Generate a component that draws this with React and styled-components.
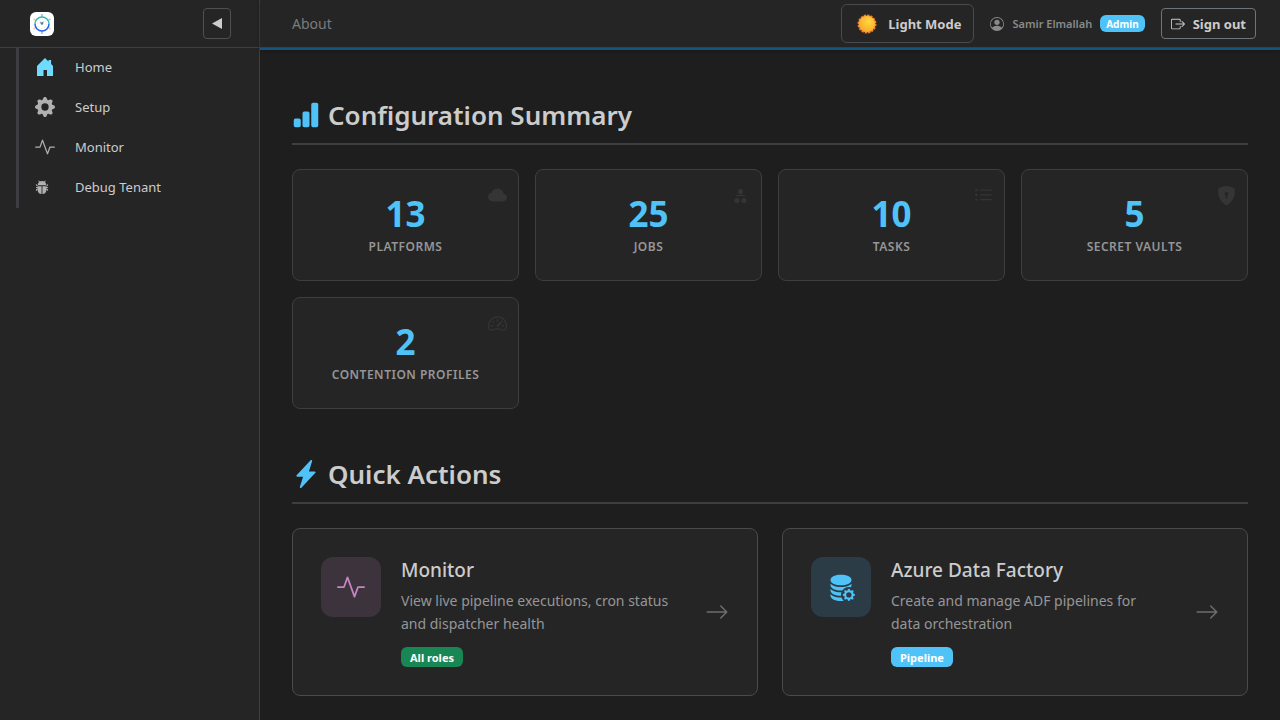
import React from 'react'
import styled, { createGlobalStyle } from 'styled-components'
import {
    BsActivity,
    BsArrowRight,
    BsBarChartFill,
    BsBoxArrowRight,
    BsBugFill,
    BsCloudFill,
    BsDatabaseFillGear,
    BsGearFill,
    BsLightningChargeFill,
    BsListUl,
    BsPersonCircle,
    BsShieldLockFill,
    BsSpeedometer2,
} from 'react-icons/bs'

const GlobalStyle = createGlobalStyle`
    * {
        box-sizing: border-box;
    }

    body {
        margin: 0;
        background: #1e1e1e;
        color: #cccccc;
        font-family: "Segoe UI", "Noto Sans", "Open Sans", sans-serif;
        font-size: 14px;
    }

    button {
        font-family: inherit;
        cursor: pointer;
    }

    svg {
        display: block;
        flex: none;
    }
`

const Layout = styled.div`
    display: flex;
    min-height: 100vh;
`

const Sidebar = styled.aside`
    flex: none;
    width: 260px;
    background: #252526;
    border-right: 1px solid #3e3e42;
`

const SidebarHeader = styled.div`
    display: flex;
    align-items: center;
    justify-content: space-between;
    height: 48px;
    padding: 0 28px 0 30px;
    border-bottom: 1px solid #3e3e42;
`

const CollapseButton = styled.button`
    display: flex;
    align-items: center;
    justify-content: center;
    width: 28px;
    height: 31px;
    padding: 0;
    background: transparent;
    border: 1px solid #505054;
    border-radius: 4px;
    color: #cccccc;
`

const Nav = styled.nav`
    display: flex;
    flex-direction: column;
    margin-left: 16px;
    border-left: 3px solid #3e3e42;
`

const NavLink = styled.a`
    display: flex;
    align-items: center;
    height: 40px;
    padding: 0 0 3px 16px;
    color: #cccccc;
    font-size: 13px;
    text-decoration: none;
`

const NavIcon = styled.span`
    width: 40px;
    color: ${props => props.$active ? '#6fdcff' : '#b0b0b0'};
`

const Content = styled.div`
    flex: 1;
    min-width: 0;
`

const TopBar = styled.header`
    display: flex;
    align-items: center;
    height: 48px;
    margin-bottom: 2px;
    padding: 0 24px 0 32px;
    background: #252526;
    border-bottom: 1px solid #3e3e42;
    box-shadow: 0 2px 0 #17537f, 0 2px 4px rgba(0, 0, 0, 0.3);
`

const AboutLink = styled.a`
    margin-right: auto;
    color: #7b7b7b;
    font-size: 14px;
    text-decoration: none;
`

const ThemeButton = styled.button`
    display: flex;
    align-items: center;
    gap: 11px;
    height: 39px;
    padding: 0 12px 0 15px;
    background: transparent;
    border: 1px solid #4a4a4d;
    border-radius: 6px;
    color: #cccccc;
    font-size: 13px;
    font-weight: 700;
`

const User = styled.div`
    display: flex;
    align-items: center;
    gap: 8px;
    margin: 0 16px;
    color: #8a8a8a;
    font-size: 11px;
    font-weight: 600;
`

const Badge = styled.span`
    display: inline-flex;
    align-items: center;
    height: ${props => props.$small ? '17px' : '20px'};
    padding: 0 ${props => props.$small ? '6px' : '9px'};
    background: ${props => props.$color};
    border-radius: 6px;
    color: #ffffff;
    font-size: ${props => props.$small ? '10px' : '11px'};
    font-weight: 700;
`

const SignOutButton = styled.button`
    display: flex;
    align-items: center;
    gap: 8px;
    height: 31px;
    padding: 0 9px;
    background: transparent;
    border: 1px solid #6c757d;
    border-radius: 4px;
    color: #cccccc;
    font-size: 13px;
    font-weight: 700;
`

const Main = styled.main`
    padding: 48px 32px 24px;
`

const Section = styled.section`
    & + & {
        margin-top: 48px;
    }
`

const SectionTitle = styled.h2`
    display: flex;
    align-items: center;
    gap: 8px;
    height: 47px;
    margin: 0 0 24px;
    padding-bottom: 11px;
    border-bottom: 2px solid #3e3e42;
    font-size: 26px;
    font-weight: 600;

    svg {
        color: #4fc3f7;
    }
`

const StatGrid = styled.div`
    display: grid;
    grid-template-columns: repeat(auto-fill, minmax(200px, 1fr));
    gap: 16px;
`

const StatCard = styled.div`
    position: relative;
    height: 112px;
    padding: 24px 16px;
    background: #252526;
    border: 1px solid #3e3e42;
    border-radius: 8px;
    text-align: center;

    svg {
        position: absolute;
        top: 16px;
        right: 11px;
        color: #353536;
    }
`

const StatNumber = styled.div`
    color: #4fc3f7;
    font-size: 35px;
    font-weight: 700;
    line-height: 40px;
`

const StatLabel = styled.div`
    margin-top: 3px;
    color: #969696;
    font-size: 12px;
    font-weight: 600;
    letter-spacing: 0.5px;
    line-height: 20px;
    text-transform: uppercase;
`

const ActionGrid = styled.div`
    display: grid;
    grid-template-columns: repeat(auto-fill, minmax(400px, 1fr));
    gap: 24px;
`

const ActionCard = styled.a`
    display: flex;
    align-items: center;
    gap: 20px;
    padding: 28px;
    background: #252526;
    border: 1px solid #4a4a4d;
    border-radius: 8px;
    color: #cccccc;
    text-decoration: none;
`

const ActionIcon = styled.div`
    display: flex;
    align-items: center;
    justify-content: center;
    align-self: flex-start;
    flex: none;
    width: 60px;
    height: 60px;
    background: ${props => props.$background};
    border-radius: 12px;
    color: ${props => props.$color};
`

const ActionText = styled.div`
    flex: 1;
    min-width: 0;
    padding-right: 12px;
`

const ActionTitle = styled.h3`
    margin: 0 0 6px;
    font-size: 19px;
    font-weight: 500;
    line-height: 26px;
`

const ActionDescription = styled.p`
    margin: 0 0 12px;
    color: #969696;
    font-size: 14px;
    line-height: 23px;
`

const ActionBadge = styled(Badge)`
    display: flex;
    width: fit-content;
`

const ActionArrow = styled(BsArrowRight)`
    color: #6e6e6e;
`

function Logo() {
    return (
        <svg width="24" height="24" viewBox="0 0 24 24" fill="none">
            <rect width="24" height="24" rx="6" fill="#fff" />
            <path d="M12 2v3M12 19v3" stroke="#9dccf5" strokeWidth="2" />
            <path d="M3.5 7l2 1M3.5 17l2-1M20.5 17l-2-1" stroke="#f6c8a8" strokeWidth="1.5" />
            <path d="M20.5 7l-2 1" stroke="#b9b4f5" strokeWidth="1.5" />
            <path d="M5 12a7 7 0 0 1 14 0" stroke="#35b9ac" strokeWidth="1.5" />
            <path d="M5 12a7 7 0 0 0 14 0" stroke="#2467ee" strokeWidth="1.5" />
            <path d="M10 10l2 1.500 1.500-2" stroke="#9aa6b5" strokeWidth="1.2" />
            <circle cx="12" cy="11.500" r="1.3" fill="#67788d" />
            <circle cx="12" cy="12" r="4.500" stroke="#dde3ea" strokeWidth="1" strokeDasharray="1 2.500" />
        </svg>
    )
}

function HomeIcon() {
    return (
        <svg width="20" height="20" viewBox="0 0 20 20" fill="currentColor">
            <path d="M10 1l3.5 3.4V3h2.6v4L18 9v10h-6v-6H8.500v6H2V9z" />
        </svg>
    )
}

function SunIcon() {
    return (
        <svg width="20" height="20" viewBox="0 0 20 20">
            <defs>
                <radialGradient id="sun" cx="0.6" cy="0.35" r="0.7">
                    <stop offset="0" stopColor="#ffd83d" />
                    <stop offset="1" stopColor="#f9a52b" />
                </radialGradient>
            </defs>
            <circle cx="10" cy="10" r="8.500" fill="#f6822c" />
            <circle cx="10" cy="10" r="8.700" fill="none" stroke="#f6822c" strokeWidth="1.6" strokeDasharray="2.2 1.21" />
            <circle cx="10" cy="10" r="8" fill="url(#sun)" />
        </svg>
    )
}

function JobsIcon() {
    return (
        <svg width="19" height="19" viewBox="0 0 19 19" fill="currentColor">
            <circle cx="9.500" cy="5.500" r="2.500" />
            <circle cx="6" cy="14.500" r="2.500" />
            <circle cx="13" cy="14.500" r="2.500" />
            <path d="M9 7h1v2h4v1H5V9h4z" />
        </svg>
    )
}

const navItems = [
    { label: 'Home', icon: <HomeIcon />, active: true },
    { label: 'Setup', icon: <BsGearFill size={20} /> },
    { label: 'Monitor', icon: <BsActivity size={20} /> },
    { label: 'Debug Tenant', icon: <BsBugFill size={14} /> },
]

const stats = [
    { number: 13, label: 'Platforms', icon: <BsCloudFill size={19} /> },
    { number: 25, label: 'Jobs', icon: <JobsIcon /> },
    { number: 10, label: 'Tasks', icon: <BsListUl size={19} /> },
    { number: 5, label: 'Secret Vaults', icon: <BsShieldLockFill size={19} /> },
    { number: 2, label: 'Contention Profiles', icon: <BsSpeedometer2 size={19} /> },
]

const actions = [
    {
        title: 'Monitor',
        description: 'View live pipeline executions, cron status and dispatcher health',
        badge: 'All roles',
        badgeColor: '#198754',
        icon: <BsActivity size={28} />,
        color: '#c586c0',
        background: '#3d333c',
    },
    {
        title: 'Azure Data Factory',
        description: 'Create and manage ADF pipelines for data orchestration',
        badge: 'Pipeline',
        badgeColor: '#4fc3f7',
        icon: <BsDatabaseFillGear size={28} />,
        color: '#4fc3f7',
        background: '#2b3c46',
    },
]

export default function App() {
    return (
        <Layout>
            <GlobalStyle />
            <Sidebar>
                <SidebarHeader>
                    <Logo />
                    <CollapseButton aria-label="Collapse sidebar">
                        <svg width="10" height="11" viewBox="0 0 10 11" fill="currentColor">
                            <path d="M10 0v11L0 5.500z" />
                        </svg>
                    </CollapseButton>
                </SidebarHeader>
                <Nav>
                    {navItems.map(item => (
                        <NavLink href="#" key={item.label}>
                            <NavIcon $active={item.active}>{item.icon}</NavIcon>
                            {item.label}
                        </NavLink>
                    ))}
                </Nav>
            </Sidebar>
            <Content>
                <TopBar>
                    <AboutLink href="#">About</AboutLink>
                    <ThemeButton>
                        <SunIcon />
                        Light Mode
                    </ThemeButton>
                    <User>
                        <BsPersonCircle size={14} />
                        <span>Samir Elmallah</span>
                        <Badge $small $color="#4fc3f7">Admin</Badge>
                    </User>
                    <SignOutButton>
                        <BsBoxArrowRight size={14} />
                        Sign out
                    </SignOutButton>
                </TopBar>
                <Main>
                    <Section>
                        <SectionTitle>
                            <BsBarChartFill size={28} />
                            Configuration Summary
                        </SectionTitle>
                        <StatGrid>
                            {stats.map(stat => (
                                <StatCard key={stat.label}>
                                    {stat.icon}
                                    <StatNumber>{stat.number}</StatNumber>
                                    <StatLabel>{stat.label}</StatLabel>
                                </StatCard>
                            ))}
                        </StatGrid>
                    </Section>
                    <Section>
                        <SectionTitle>
                            <BsLightningChargeFill size={28} />
                            Quick Actions
                        </SectionTitle>
                        <ActionGrid>
                            {actions.map(action => (
                                <ActionCard href="#" key={action.title}>
                                    <ActionIcon $color={action.color} $background={action.background}>
                                        {action.icon}
                                    </ActionIcon>
                                    <ActionText>
                                        <ActionTitle>{action.title}</ActionTitle>
                                        <ActionDescription>{action.description}</ActionDescription>
                                        <ActionBadge $color={action.badgeColor}>{action.badge}</ActionBadge>
                                    </ActionText>
                                    <ActionArrow size={24} />
                                </ActionCard>
                            ))}
                        </ActionGrid>
                    </Section>
                </Main>
            </Content>
        </Layout>
    )
}
